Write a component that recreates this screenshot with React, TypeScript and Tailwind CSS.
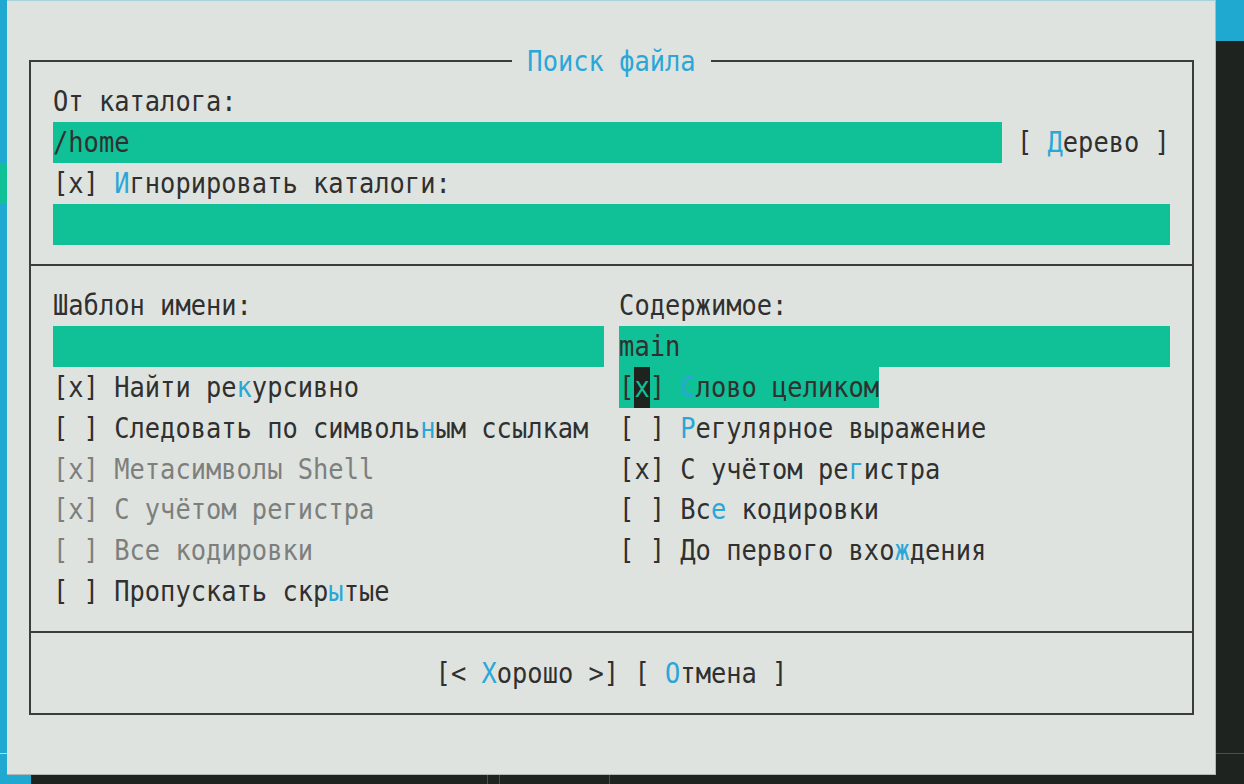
import React from "react";

// one terminal cell is 15.3 x 40.8 px
function Cell({ ch, hot, dim, cursor }: { ch: string; hot?: boolean; dim?: boolean; cursor?: boolean }) {
  let color = "text-[#2f302f]";
  if (dim) color = "text-[#7d7f7d]";
  if (hot) color = "text-[#2aa7d7]";
  if (cursor) color = "text-[#10c097] bg-[#1f2320]";
  return (
    <span className={`inline-block w-[15.3px] text-center whitespace-pre ${color}`}>
      <span className="inline-block scale-y-[1.15]">{ch}</span>
    </span>
  );
}

// "&" marks the hotkey letter, as mc does
function Text({ s, dim, cursorAt }: { s: string; dim?: boolean; cursorAt?: number }) {
  const cells: React.ReactNode[] = [];
  let hot = false;
  let i = 0;
  for (const ch of s) {
    if (ch === "&") {
      hot = true;
      continue;
    }
    cells.push(<Cell key={i} ch={ch} hot={hot} dim={dim} cursor={i === cursorAt} />);
    hot = false;
    i++;
  }
  return <span className="flex">{cells}</span>;
}

function Row({ children, className = "" }: { children?: React.ReactNode; className?: string }) {
  return <div className={`flex h-[40.8px] leading-[40.8px] ${className}`}>{children}</div>;
}

function Sep() {
  return (
    <div className="flex h-[40.8px] items-center">
      <div className="h-[2px] w-full bg-[#3a3d3a]" />
    </div>
  );
}

function Field({ value = "", cells }: { value?: string; cells: string }) {
  return <div className={`bg-[#10c097] ${cells}`}>{value && <Text s={value} />}</div>;
}

function Pair({ left, right }: { left?: React.ReactNode; right?: React.ReactNode }) {
  return (
    <Row className="pl-[22px]">
      <div className="w-[566.1px]">{left}</div>
      <div>{right}</div>
    </Row>
  );
}

function Dialog() {
  return (
    <div className="h-[775px] w-[1209px] border-t border-b border-r border-t-[#a7d3dc] border-b-[#b3b7b3] border-r-[#b3b7b3] bg-[#dfe3df] pt-[59px]">
      <div className="ml-[22px] h-[655px] w-[1165px] border-2 border-[#3a3d3a]">
        <div className="-mt-[21.4px] flex h-[40.8px] justify-center leading-[40.8px]">
          <span className="bg-[#dfe3df] px-[15.3px]">
            <span className="flex text-[#2aa7d7]">
              {"Поиск файла".split("").map((c, i) => (
                <span key={i} className="inline-block w-[15.3px] text-center whitespace-pre">
                  <span className="inline-block scale-y-[1.15]">{c}</span>
                </span>
              ))}
            </span>
          </span>
        </div>

        <Row className="pl-[22px]">
          <Text s="От каталога:" />
        </Row>
        <Row className="pl-[22px]">
          <Field value="/home" cells="w-[948.6px]" />
          <div className="ml-[15.3px]">
            <Text s="[ &Дерево ]" />
          </div>
        </Row>
        <Row className="pl-[22px]">
          <Text s="[x] &Игнорировать каталоги:" />
        </Row>
        <Row className="pl-[22px]">
          <Field cells="w-[1116.9px]" />
        </Row>

        <Sep />

        <Pair left={<Text s="Шаблон имени:" />} right={<Text s="Содержимое:" />} />
        <Row className="pl-[22px]">
          <Field cells="w-[550.8px]" />
          <div className="ml-[15.3px]">
            <Field value="main" cells="w-[550.8px]" />
          </div>
        </Row>
        <Pair
          left={<Text s="[x] Найти ре&курсивно" />}
          right={
            <div className="bg-[#10c097]">
              <Text s="[x] &Слово целиком" cursorAt={1} />
            </div>
          }
        />
        <Pair
          left={<Text s="[ ] Следовать по символь&ным ссылкам" />}
          right={<Text s="[ ] &Регулярное выражение" />}
        />
        <Pair left={<Text s="[x] Метасимволы Shell" dim />} right={<Text s="[x] С учётом ре&гистра" />} />
        <Pair left={<Text s="[x] С учётом регистра" dim />} right={<Text s="[ ] Вс&е кодировки" />} />
        <Pair left={<Text s="[ ] Все кодировки" dim />} right={<Text s="[ ] До первого вхо&ждения" />} />
        <Pair left={<Text s="[ ] Пропускать скр&ытые" />} />

        <Sep />

        <Row className="justify-center">
          <Text s="[< &Хорошо >] [ &Отмена ]" />
        </Row>
      </div>
    </div>
  );
}

export default function App() {
  return (
    <div className="flex h-[784px] w-[1244px] flex-col overflow-hidden bg-[#1f2320] font-['DejaVu_Sans_Mono',monospace] text-[25.4px]">
      <div className="flex h-[775px]">
        <div className="flex w-[7px] flex-col">
          <div className="h-[163.2px] bg-[#1fa9d0]" />
          <div className="h-[40.8px] bg-[#10c097]" />
          <div className="h-[549px] bg-[#1fa9d0]" />
          <div className="h-[1px] bg-[#b9d9e1]" />
          <div className="flex-1 bg-[#1fa9d0]" />
        </div>
        <Dialog />
        <div className="flex w-[28px] flex-col">
          <div className="h-[40.8px] bg-[#1fa9d0]" />
          <div className="h-[712px]" />
          <div className="h-[1px] bg-[#4b4f4b]" />
        </div>
      </div>
      <div className="flex h-[9px]">
        <div className="w-[31px] bg-[#1fa9d0]" />
        <div className="w-[456px]" />
        <div className="w-[1px] bg-[#4b4f4b]" />
        <div className="w-[11px]" />
        <div className="w-[1px] bg-[#4b4f4b]" />
        <div className="w-[109px]" />
        <div className="w-[1px] bg-[#4b4f4b]" />
        <div className="overflow-hidden pl-[20px] text-[#8a8d8a] leading-[40.8px]">
          <span className="block pt-[7px]">ОТКР</span>
        </div>
      </div>
    </div>
  );
}
